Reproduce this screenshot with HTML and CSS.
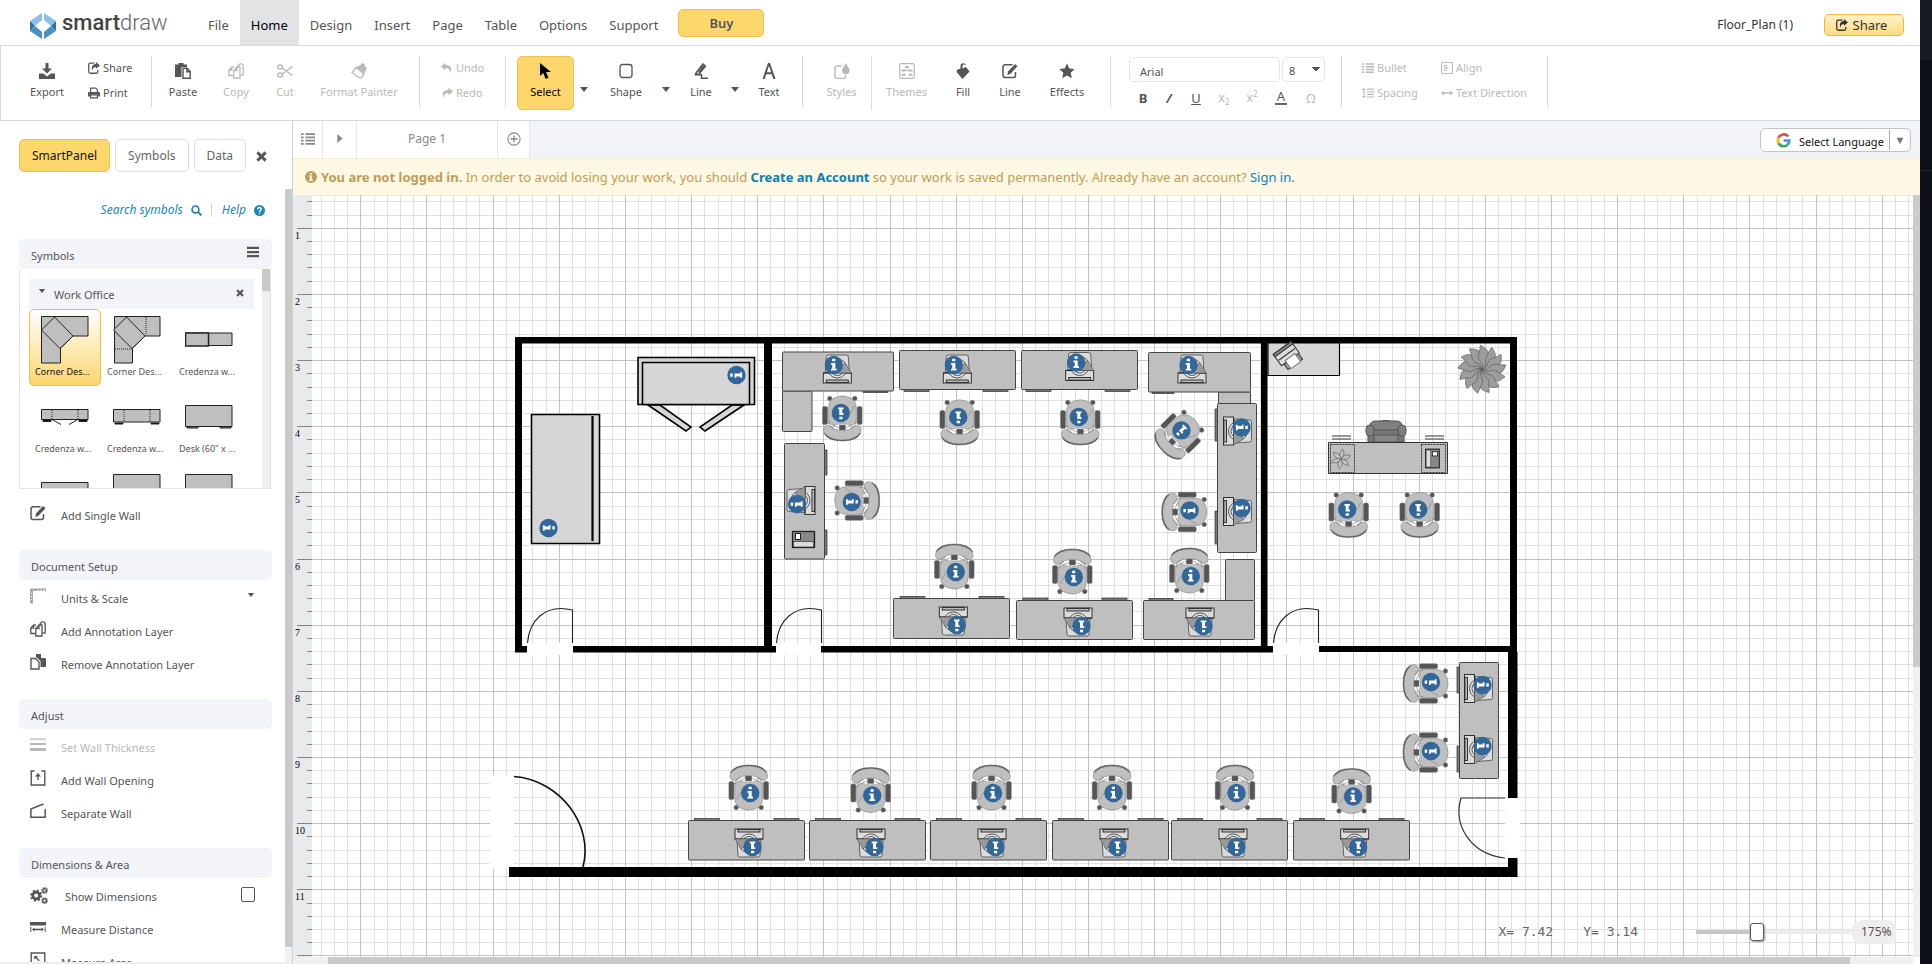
FILE: index.html
```html
<!DOCTYPE html>
<html lang="en">
<head>
<meta charset="utf-8">
<title>SmartDraw - Floor_Plan (1)</title>
<link rel="stylesheet" href="styles.css">
</head>
<body>
<svg class="defs" aria-hidden="true">
  <defs>
    <symbol id="i-export" viewBox="0 0 16 16"><path d="M6.5 0h3v5.5H13L8 10.5 3 5.500h3.500zM0 10.500h4.200L8 13.500l3.800-3H16V16H0z"/></symbol>
    <symbol id="i-share" viewBox="0 0 16 16"><path d="M8.500 1.500H3a2 2 0 0 0-2 2V13a2 2 0 0 0 2 2h8a2 2 0 0 0 2-2v-2.500" fill="none" stroke="currentColor" stroke-width="1.700"/><path d="M10.500 0 16 4.500l-5.500 4.500V6.500C7.500 6.500 6.300 8 6 11.500 4.300 8.500 5 3 10.500 2.700z"/></symbol>
    <symbol id="i-print" viewBox="0 0 16 16"><path d="M3.500 7V1.500h7l2 2V7M3.500 10.500h9v4h-9z" fill="none" stroke="currentColor" stroke-width="1.600"/><path d="M1.500 6.500h13q1.500 0 1.500 1.500v4.500h-2.500V10h-11v2.500H0V8q0-1.500 1.500-1.500z"/></symbol>
    <symbol id="i-paste" viewBox="0 0 16 16"><path d="M0 1.500h3.500V0h5v1.500H12V4H6.500v10H0z"/><path d="M8 5.200h4l3.200 3.200v6.800H8zM11.800 5.200v3.500h3.500" fill="none" stroke="currentColor" stroke-width="1.400"/></symbol>
    <symbol id="i-copy" viewBox="0 0 16 16"><path d="M5.500 12.500H.8V7l3-3.200H6M3.800 4v3.200H.8M9.500 3.500 12 .8h1.500l1.700 1.700v9.700h-3M5.800 7.500 9 4h3v11H5.800zM9 4v3.500H5.800" fill="none" stroke="currentColor" stroke-width="1.300"/></symbol>
    <symbol id="i-remove" viewBox="0 0 16 16"><path d="M1 4.500h4.500L9 8v7H1z" fill="none" stroke="currentColor" stroke-width="1.400"/><path d="M6 0h5v4h4l1 1v8h-5.500V7L6 3z"/></symbol>
    <symbol id="i-cut" viewBox="0 0 16 16"><g fill="none" stroke="currentColor" stroke-width="1.500"><ellipse cx="3.200" cy="4" rx="2.400" ry="2"/><ellipse cx="3.200" cy="12" rx="2.400" ry="2"/><path d="M5.300 5 15.500 12.500M5.300 11 15.500 3.500"/></g></symbol>
    <symbol id="i-brush" viewBox="0 0 16 16"><path d="M5 4.500 13 11l-3 4-4-1.500L1 9.500z" fill="none" stroke="currentColor" stroke-width="1.300"/><path d="m8 3 2-1.500L11 0l2.500 1L14 3.500 16 5l-2.500 5.500L5 4z"/></symbol>
    <symbol id="i-undo" viewBox="0 0 16 16"><path d="M6 1 0 6l6 5V8c4 0 6 1 5.500 6.500C16 9 13.500 4 6 4z"/></symbol>
    <symbol id="i-redo" viewBox="0 0 16 16"><path d="m10 1 6 5-6 5V8c-4 0-6 1-5.500 6.500C0 9 2.500 4 10 4z"/></symbol>
    <symbol id="i-cursor" viewBox="0 0 16 16"><path d="M2 0v13l3.200-3 2.500 6 2.800-1.200L8 9h5z"/></symbol>
    <symbol id="i-shape" viewBox="0 0 16 16"><rect x="2" y="1.500" width="12" height="13" rx="2.500" fill="none" stroke="currentColor" stroke-width="1.300"/></symbol>
    <symbol id="i-line" viewBox="0 0 16 16"><path d="M3 10 10 1l2.500 2L6 11l-3.500.500zM3 11.800h5.500v3.500H15" fill="none" stroke="currentColor" stroke-width="1.500"/><path d="M5 9 10 2l2 1.500L6.500 10z"/></symbol>
    <symbol id="i-text" viewBox="0 0 16 16"><path d="M1.500 16 7 0h2l5.500 16h-2.300l-1.500-4.700H5.200L3.700 16zM5.900 9.200h4.200L8 2.700z"/></symbol>
    <symbol id="i-styles" viewBox="0 0 16 16"><path d="M7.500 3H3a2 2 0 0 0-2 2v8.500a2 2 0 0 0 2 2h6.500a2 2 0 0 0 2-2V12" fill="none" stroke="currentColor" stroke-width="1.400"/><path d="M11.800 0c2 4 3.700 5 3.700 7.500a3.700 3.700 0 0 1-7.400 0C8.100 5 10 4 11.800 0z"/></symbol>
    <symbol id="i-themes" viewBox="0 0 16 16"><rect x=".7" y=".7" width="14.600" height="14.600" rx="1.500" fill="none" stroke="currentColor" stroke-width="1.200"/><path d="M6 3h4v2.200H6zM2.500 6.500h4v2H2.500zM9.500 6.500h4v2h-4zM6 7h4v1H6zM2.500 10.800h4v2h-4zM9.500 10.800h4v2h-4z"/></symbol>
    <symbol id="i-fill" viewBox="0 0 16 16"><path d="M5.500 5.500V2.500C5.500-.5 11-.5 11 2.500c-1-1.500-3.500-1.500-3.500.5v2.500l3.500-1.500 3.500 4.500L7.500 16 2 9.500 1.500 7z"/></symbol>
    <symbol id="i-edit" viewBox="0 0 16 16"><path d="M10.500 1.800H3a2 2 0 0 0-2 2v8.700a2 2 0 0 0 2 2h8.500a2 2 0 0 0 2-2V9" fill="none" stroke="currentColor" stroke-width="1.500"/><path d="m6 8.500 7-7.500 2.500 2.200-7 7.600L5.500 12z"/></symbol>
    <symbol id="i-star" viewBox="0 0 16 16"><path d="m8 .5 2.300 5 5.400.6-4 3.700 1.100 5.500L8 12.600l-4.800 2.700 1.100-5.500-4-3.700 5.400-.6z"/></symbol>
    <symbol id="i-list" viewBox="0 0 16 16"><path d="M0 1.500h3v2H0zM5 1.500h11v2H5zM0 5.200h3v2H0zM5 5.200h11v2H5zM0 8.900h3v2H0zM5 8.900h11v2H5zM0 12.600h3v2H0zM5 12.600h11v2H5z"/></symbol>
    <symbol id="i-spacing" viewBox="0 0 16 16"><path d="M2.500 1 5 4H3.300v8H5l-2.500 3L0 12h1.700V4H0zM6.500 2H16v1.600H6.500zM6.500 5.500H16v1.600H6.500zM6.500 9H16v1.600H6.500zM6.500 12.500H16v1.600H6.500z"/></symbol>
    <symbol id="i-align" viewBox="0 0 16 16"><path d="M.7.700h14.600v14.600H.7z" fill="none" stroke="currentColor" stroke-width="1.300"/><path d="M3.500 4h5v1.500h-5zM3.500 7h6.500v1.500H3.500zM3.500 10h4v1.500h-4z"/></symbol>
    <symbol id="i-dir" viewBox="0 0 16 16"><path d="m0 8 3.500-3.500V7h9V4.500L16 8l-3.500 3.500V9h-9v2.500z"/></symbol>
    <symbol id="i-x" viewBox="0 0 16 16"><path d="M3.500.5 8 5l4.500-4.500 3 3L11 8l4.500 4.500-3 3L8 11l-4.500 4.500-3-3L5 8 .5 3.500z"/></symbol>
    <symbol id="i-search" viewBox="0 0 16 16"><circle cx="6.500" cy="6.500" r="5" fill="none" stroke="currentColor" stroke-width="2.400"/><path d="m10 10 5 5" stroke="currentColor" stroke-width="3"/></symbol>
    <symbol id="i-help" viewBox="0 0 16 16"><circle cx="8" cy="8" r="8"/><path d="M5.300 6.200C5.300 2.500 10.800 3 10.600 6.200 10.500 8 8 7.800 8 10" fill="none" stroke="#fff" stroke-width="2"/><path d="M7 11.200h2v2H7z" fill="#fff"/></symbol>
    <symbol id="i-menu" viewBox="0 0 16 16"><path d="M0 1h16v3H0zM0 6.500h16v3H0zM0 12h16v3H0z"/></symbol>
    <symbol id="i-info" viewBox="0 0 16 16"><circle cx="8" cy="8" r="8"/><path d="M6.500 2.500h3v2.300h-3zM5.500 6h4v5.500h1.200v1.800H5.300v-1.800h1.200V7.800h-1z" fill="#fcf8e3"/></symbol>
    <symbol id="i-plus" viewBox="0 0 16 16"><circle cx="8" cy="8" r="7" fill="none" stroke="currentColor" stroke-width="1.200"/><path d="M8 4v8M4 8h8" stroke="currentColor" stroke-width="1.500"/></symbol>
    <symbol id="i-units" viewBox="0 0 16 16"><path d="M0 .5h16v3h-1V2h-1.500v1H12V2h-1.500v1H9V2H7.500v1H3v12.500H0zM1 5v1h1V5zM1 8v1h1V8zM1 11v1h1v-1z" opacity=".5"/></symbol>
    <symbol id="i-thick" viewBox="0 0 16 16"><path d="M0 1.500h16v1.200H0zM0 6h16v2H0zM0 11h16v3H0z"/></symbol>
    <symbol id="i-opening" viewBox="0 0 16 16"><path d="M4.500 1H1.200v14h13.600V1h-3.300" fill="none" stroke="currentColor" stroke-width="1.400"/><path d="m8 3 3 3.500H8.700V10H7.300V6.500H5z"/></symbol>
    <symbol id="i-separate" viewBox="0 0 16 16"><path d="M13.500 1 .9 6v8.200h14.300V6" fill="none" stroke="currentColor" stroke-width="1.500"/></symbol>
    <symbol id="i-gears" viewBox="0 0 16 16"><g fill="none" stroke="currentColor"><circle cx="5.500" cy="8.500" r="3" stroke-width="2.400"/><circle cx="5.500" cy="8.500" r="4.600" stroke-width="1.600" stroke-dasharray="1.800 1.800"/><circle cx="13" cy="4" r="1.600" stroke-width="1.300"/><circle cx="13" cy="4" r="2.600" stroke-dasharray="1 1"/><circle cx="13" cy="13" r="1.600" stroke-width="1.300"/><circle cx="13" cy="13" r="2.600" stroke-dasharray="1 1"/></g></symbol>
    <symbol id="i-measure" viewBox="0 0 16 16"><path d="M0 3h16v3.500H0zM.3 8h1v5h-1zM14.700 8h1v5h-1zM2 10.500l2.500-2v1.300h7V8.500l2.500 2-2.500 2v-1.300h-7v1.300z"/></symbol>
    <symbol id="i-area" viewBox="0 0 16 16"><path d="M1.200 1h13.600v14H1.200z" fill="none" stroke="currentColor" stroke-width="1.400"/><path d="M4 4h4L6.800 5.200l3 3-1 1-3-3L4.500 7.500z"/></symbol>
    <symbol id="i-caret" viewBox="0 0 8 5"><path d="M0 0h8L4 5z"/></symbol>

    <g id="badge"><circle r="9.200" fill="#336699"/><path d="M-1.700-6.300h3.200v2.500h-3.200zM-2.800-2h4.300v5.800h1.300v1.800h-5.600v-1.800h1.300V-.2h-1.300z" fill="#fff"/></g>
    <g id="chair" stroke="#777" stroke-width=".5">
      <rect x="-19.800" y="-6.500" width="5" height="18" rx="1.500" fill="#555"/><rect x="14.800" y="-6.500" width="5" height="18" rx="1.500" fill="#555"/>
      <circle cx="-12.500" cy="19.500" r="2.300" fill="#555"/><circle cx="12.500" cy="19.500" r="2.300" fill="#555"/>
      <path d="M-14-5q14-8 28 0V10q0 11-14 12.200Q-14 21-14 10z" fill="#bfbfbf"/>
      <path d="M-9-7Q0-13 9-7 0-4-9-7z" fill="#fff"/>
      <path d="M-18.500-15q4-8 18.500-8t18.500 8Q0-25-18.500-15z" fill="#555" stroke="#555"/>
      <path d="M-18.500-14Q-13-22 0-22t18.500 8q1.500 6-4 6.500-4 .5-7-4-7.500-2-15 0-3 4.500-7 4-5.500-.5-4-6.500z" fill="#bfbfbf"/>
      <path d="M-8-11q-6 1-5 8M8-11q6 1 5 8M-12 12q3-8 8-11" fill="none"/>
      <rect x="-3" y="-12" width="6" height="5" fill="#555"/>
      <use href="#badge" x="1.500" y="5" stroke="none"/>
    </g>
    <g id="pc" stroke="#222" stroke-width=".9">
      <path d="M-11-12q0-2 2-2H9q2 0 2 2l1 15h-24z" fill="#dcdcdc" stroke="#555"/>
      <rect x="-14" y="4" width="28" height="10" fill="#dcdcdc"/>
      <circle r="9.500" cy="-.5" fill="#e6e6e6" stroke="#444"/><circle r="7" cy="-.5" fill="#ececec" stroke="#444"/>
      <path d="M-14 4H14" stroke-width=".8"/>
      <rect x="-11" y="11" width="22" height="2.600" fill="#bbb"/>
      <path d="M-2 2 8-6 14 4H1z" fill="#9a9a9a" stroke="#444" stroke-width=".5"/>
      <use href="#badge" x="-3.500" y="-4" stroke="none"/>
    </g>
    <g id="phone" stroke="#222"><rect x="-11" y="-8" width="22" height="16" fill="#888" stroke-width="1.300"/><rect x="-8" y="-6" width="5" height="6" fill="#fff"/><rect x="-10" y="2" width="20" height="5.500" fill="#ddd" stroke-width=".6"/></g>
    <path id="door" d="M.5 643C2 622 17 603 45.500 610V643" fill="none" stroke="#222" stroke-width="1.100"/>
    <path id="leaf" d="M0 0C6-4-1-10 4-15 8-18 8-21 10-22 13-17 16-12 10-9 6-7 8-2 0 0z" fill="#9d9d9d" stroke="#555" stroke-width=".6"/>
    <path id="petal" d="M0 0Q-4-5 0-10 4-5 0 0z" fill="#c4c4c4" stroke="#666" stroke-width=".7"/>
  </defs>
</svg>

<div class="window">
<div class="app">
  <header class="menubar">
    <a class="logo" href="#">
      <svg viewBox="0 0 26 26" class="logo-mark"><path d="M12 0 0 8l5 5 7-6z" fill="#8cc0ec"/><path d="M14 0l12 8-5 5-7-6z" fill="#8cc0ec"/><path d="M0 8l5 5-5 5z" fill="#2f6fa3"/><path d="M26 8l-5 5 5 5z" fill="#2f6fa3"/><path d="M0 18l5-5 7 6v7z" fill="#4990c6"/><path d="M26 18l-5-5-7 6v7z" fill="#4990c6"/></svg>
      <span><b>smart</b>draw</span>
    </a>
    <nav class="menus">
      <a href="#">File</a><a href="#" class="on">Home</a><a href="#">Design</a><a href="#">Insert</a><a href="#">Page</a><a href="#">Table</a><a href="#">Options</a><a href="#">Support</a>
    </nav>
    <button class="buy">Buy</button>
    <span class="doc">Floor_Plan (1)</span>
    <button class="share"><svg><use href="#i-share"/></svg>Share</button>
  </header>

  <div class="toolbar">
    <div class="group g-export">
      <button class="tool"><svg><use href="#i-export"/></svg>Export</button>
      <div class="stack"><button><svg><use href="#i-share"/></svg>Share</button><button><svg><use href="#i-print"/></svg>Print</button></div>
    </div>
    <div class="group g-clip">
      <button class="tool"><svg><use href="#i-paste"/></svg>Paste</button>
      <button class="tool off"><svg><use href="#i-copy"/></svg>Copy</button>
      <button class="tool off"><svg><use href="#i-cut"/></svg>Cut</button>
      <button class="tool off"><svg><use href="#i-brush"/></svg>Format Painter</button>
    </div>
    <div class="group g-undo">
      <div class="stack off"><button><svg><use href="#i-undo"/></svg>Undo</button><button><svg><use href="#i-redo"/></svg>Redo</button></div>
    </div>
    <div class="group g-draw">
      <button class="tool selected"><svg><use href="#i-cursor"/></svg>Select</button>
      <button class="drop" aria-label="Select options"><svg><use href="#i-caret"/></svg></button>
      <button class="tool"><svg><use href="#i-shape"/></svg>Shape</button>
      <button class="drop" aria-label="Shape options"><svg><use href="#i-caret"/></svg></button>
      <button class="tool"><svg><use href="#i-line"/></svg>Line</button>
      <button class="drop" aria-label="Line options"><svg><use href="#i-caret"/></svg></button>
      <button class="tool"><svg><use href="#i-text"/></svg>Text</button>
    </div>
    <div class="group g-style">
      <button class="tool off split"><svg><use href="#i-styles"/></svg>Styles</button>
      <button class="tool off"><svg><use href="#i-themes"/></svg>Themes</button>
      <button class="tool"><svg><use href="#i-fill"/></svg>Fill</button>
      <button class="tool"><svg><use href="#i-edit"/></svg>Line</button>
      <button class="tool"><svg><use href="#i-star"/></svg>Effects</button>
    </div>
    <div class="group g-font">
      <div class="fields">
        <input class="font-name" aria-label="Font" value="Arial">
        <select class="font-size" aria-label="Font size"><option>8</option></select>
      </div>
      <div class="marks">
        <button><b>B</b></button><button><b class="slant">/</b></button><button><u>U</u></button><button class="off script">x<sub>2</sub></button><button class="off script">x<sup>2</sup></button><button class="color">A</button><button class="off">Ω</button>
      </div>
    </div>
    <div class="group g-para off">
      <div class="stack"><button><svg><use href="#i-list"/></svg>Bullet</button><button><svg><use href="#i-spacing"/></svg>Spacing</button></div>
      <div class="stack"><button><svg><use href="#i-align"/></svg>Align</button><button><svg><use href="#i-dir"/></svg>Text Direction</button></div>
    </div>
  </div>

  <div class="body">
    <aside class="sidebar">
      <div class="panel-tabs">
        <button class="on">SmartPanel</button><button>Symbols</button><button>Data</button>
        <button class="close" aria-label="Close panel"><svg><use href="#i-x"/></svg></button>
      </div>
      <div class="scroll">
        <div class="panel">
          <div class="links"><a href="#">Search symbols <svg><use href="#i-search"/></svg></a><a href="#">Help <svg><use href="#i-help"/></svg></a></div>
          <h2>Symbols<svg><use href="#i-menu"/></svg></h2>
          <div class="library">
            <div class="lib-body">
              <h3><svg class="caret"><use href="#i-caret"/></svg>Work Office<svg class="x"><use href="#i-x"/></svg></h3>
              <div class="cells">
                <button class="cell on"><svg viewBox="0 0 48 48"><path d="M.5.500h46.500v19.500H32L19.500 32.500V47H.5z"/><path d="m13.500 1 18.500 19L19 32.500.5 14z"/></svg>Corner Des...</button>
                <button class="cell"><svg viewBox="0 0 48 48"><path d="M1.500.500H47v19.500H32L19.500 32.500V47h-18z"/><path d="m13.500 1 18.500 19L19 32.500.500 14z"/><path d="M33 1v18M2 33h17" stroke-dasharray="1 1"/></svg>Corner Des...</button>
                <button class="cell"><svg viewBox="0 0 48 48"><path d="M.5 17H47v12.500H.5z"/><path d="M.5 17h23v13H.5z" stroke-width="1.500"/></svg>Credenza w...</button>
                <button class="cell"><svg viewBox="0 0 48 48"><path d="M.5 16.500H47v10H.5z"/><path d="M2 27h8v1.500H2zM38 27h8v1.500h-8z" fill="#000"/><path d="m12 27 8 4.500M36 27l-8 4.500"/><path d="M11 17v9M37 17v9" stroke-dasharray="1 1"/></svg>Credenza w...</button>
                <button class="cell"><svg viewBox="0 0 48 48"><path d="M.5 16.500H47v12.500H.5z"/><path d="M2 30h8v1H2zM38 30h8v1h-8z" fill="#000"/><path d="M11 17v12M37 17v12" stroke-dasharray="1 1"/></svg>Credenza w...</button>
                <button class="cell"><svg viewBox="0 0 48 48"><path d="M.5 12.500H47v21H.5zM2 34h11v1H2zM35 34h11v1H35z"/></svg>Desk (60" x ...</button>
                <button class="cell" aria-label="Low desk"><svg viewBox="0 0 48 48"><path d="M.5 12.500H47v21H.5z"/></svg></button>
                <button class="cell" aria-label="Desk"><svg viewBox="0 0 48 48"><path d="M.5 4.500H47v30H.5z"/></svg></button>
                <button class="cell" aria-label="Desk"><svg viewBox="0 0 48 48"><path d="M.5 4.500H47v30H.5z"/></svg></button>
              </div>
            </div>
            <div class="lib-track"><i></i></div>
          </div>
          <div class="rows solo"><button><svg><use href="#i-edit"/></svg>Add Single Wall</button></div>
          <h2>Document Setup</h2>
          <div class="rows">
            <button><svg><use href="#i-units"/></svg>Units &amp; Scale<svg class="caret"><use href="#i-caret"/></svg></button>
            <button><svg><use href="#i-copy"/></svg>Add Annotation Layer</button>
            <button><svg><use href="#i-remove"/></svg>Remove Annotation Layer</button>
          </div>
          <h2>Adjust</h2>
          <div class="rows">
            <button class="off"><svg><use href="#i-thick"/></svg>Set Wall Thickness</button>
            <button><svg><use href="#i-opening"/></svg>Add Wall Opening</button>
            <button><svg><use href="#i-separate"/></svg>Separate Wall</button>
          </div>
          <h2>Dimensions &amp; Area</h2>
          <div class="rows">
            <label><svg class="gears"><use href="#i-gears"/></svg>Show Dimensions<input type="checkbox"></label>
            <button><svg><use href="#i-measure"/></svg>Measure Distance</button>
            <button><svg><use href="#i-area"/></svg>Measure Area</button>
          </div>
        </div>
        <div class="side-track"><i></i></div>
      </div>
    </aside>

    <main class="work">
      <div class="pages">
        <button class="p-list" aria-label="Page list"><svg><use href="#i-list"/></svg></button>
        <button class="p-next" aria-label="Next page"><svg viewBox="0 0 6 10"><path d="M0 0l6 5-6 5z"/></svg></button>
        <button class="p-name">Page 1</button>
        <button class="p-add" aria-label="Add page"><svg><use href="#i-plus"/></svg></button>
        <button class="language"><svg viewBox="0 0 18 18"><g fill="none" stroke-width="3.200"><path d="M14.500 4A7 7 0 0 0 3 5.700" stroke="#e04a3f"/><path d="M3 5.700a7 7 0 0 0 0 6.600" stroke="#f4bd19"/><path d="M3 12.300a7 7 0 0 0 10.500 2" stroke="#3ba757"/><path d="M13.500 14.300A7 7 0 0 0 16 9H9" stroke="#4f8ee8"/></g></svg><span>Select Language</span><i>&#9660;</i></button>
      </div>
      <p class="notice"><svg><use href="#i-info"/></svg><b>You are not logged in.</b> In order to avoid losing your work, you should <a href="#"><b>Create an Account</b></a> so your work is saved permanently. Already have an account? <a href="#">Sign in.</a></p>
      <div class="stage">
        <svg class="plan" role="img" aria-label="Office floor plan">
          <g transform="translate(-293 -195)">
            <g id="grid"></g>
            <g id="ruler"></g>
            <path d="M527 643h46v12h-46zM776 643h45v12h-45zM1273 643h46v12h-46zM490 775h24v94h-24zM1505 798h15v60h-15z" fill="#fff"/>
            <path d="M515 337H1517V652H1319V646H1510V343.500H1267.500V646H1273V652.500H821V646H1261V343.500H772V646H776V652.500H573V646H764V343.500H522V646H527V652.500H515z"/>
            <path d="M1508 652h9.500v146h-9.500zM1508 858h9.500v19H509V867h999z"/>
            <use href="#door" x="527"/><use href="#door" x="776"/><use href="#door" x="1273"/>
            <path d="M514 776.500C560 780 594 825 583 867" fill="none" stroke="#111" stroke-width="1.600"/>
            <path d="M1505 798H1461C1453 825 1470 854 1505 858" fill="none" stroke="#333" stroke-width="1.200"/>
            <g fill="#d6d6d6" stroke="#000" stroke-width="1.600">
              <path d="M648 405H660L691 427 686 431zM732 405H744L705 431 700 427z"/>
              <path d="M638 357.500H754.500V404.500H638z"/><path d="M642.500 362.500H749.500V404.500H642.500z"/>
              <path d="M531.500 414.500H599.500V543.500H531.500z"/><path d="M592.500 416V541" stroke-width="2.200"/>
              <path d="M1268 343H1339.500V375.500H1268z" stroke-width="1.200"/>
            </g>
            <g id="furniture"></g>
            <g transform="translate(1288 356) rotate(-36)" fill="#ddd" stroke="#333"><path d="M-8 4H10V11H-8z" fill="#999"/><path d="M-11-10H11V4H-11z"/><path d="M-11-10H11V-7H-11z" fill="#888"/><path d="M-10-2H10"/><path d="M-5 2H7V12H-5z" fill="#fff" stroke="#777"/></g>
            <g stroke="#555"><path d="M1368 442V426Q1386 415 1404 426V442z" fill="#777"/><rect x="1370" y="421" width="32" height="9" rx="5" fill="#808080"/><rect x="1366" y="425" width="8" height="11" rx="4" fill="#808080"/><rect x="1398" y="425" width="8" height="11" rx="4" fill="#808080"/><path d="M1374 435h24v7h-24z" fill="#858585"/></g>
            <g stroke="#333"><path d="M1328.500 442.500h119v31h-119z" fill="#bfbfbf"/><path d="M1330.500 444.500h24v28h-24zM1421.500 444.500h24v28h-24z" fill="none" stroke-dasharray="2 1"/><path d="M1332 436h19M1332 439h19M1425 436h19M1425 439h19"/></g>
            <use href="#phone" transform="translate(1432.500 458.500) rotate(90) scale(.85)"/>
            <g id="plants"></g>
          </g>
        </svg>
        <div class="v-track"><i></i></div>
        <div class="h-track"><i></i></div>
        <div class="status">
          <span>X= 7.42</span><span>Y= 3.14</span>
          <input type="range" min="0" max="100" value="38" aria-label="Zoom">
          <output>175%</output>
        </div>
      </div>
    </main>
  </div>
</div>
<div class="edge"><i></i></div>
</div>
<script src="plan.js"></script>
</body>
</html>
```
FILE: styles.css
```css
* { box-sizing: border-box; }
body { margin: 0; font: 13px/20px "Noto Sans", "Open Sans", sans-serif; color: #555; background: #fff; }
button, input, select { font: inherit; color: inherit; background: none; border: 0; padding: 0; margin: 0; }
a { color: inherit; text-decoration: none; }
svg { fill: currentColor; flex: none; }
h2, h3, p { margin: 0; font-weight: 400; }
i { font-style: normal; }
.defs { position: absolute; width: 0; height: 0; }
.off { color: #b9b9b9; }

.window { display: flex; height: 100vh; overflow: hidden; }
.app { flex: 1; min-width: 0; display: flex; flex-direction: column; }
.edge { width: 12px; background: #0d1017; }
.edge i { display: block; height: 171px; border-bottom: 1px solid #23272e; background: linear-gradient(#161b22 60px, #0d1017 60px); }

.menubar { display: flex; align-items: center; height: 46px; padding: 0 16px 0 30px; border-bottom: 1px solid #d8d9db; }
.logo { display: flex; align-items: center; gap: 6px; width: 167px; color: #666; font: 300 22px/24px Roboto, sans-serif; }
.logo b { color: #444; font-weight: 500; }
.logo-mark { width: 26px; height: 26px; margin-top: 6px; }
.menus { display: flex; align-self: stretch; }
.menus a { padding: 15px 11px 0; }
.menus .on { background: #e2e3e5; color: #000; }
.buy { width: 86px; height: 28px; margin: 0 auto 0 9px; border: 1px solid #f0c14f; border-radius: 5px; background: #fdd76c; font-weight: 600; }
.doc { color: #333; font-size: 12px; padding-top: 4px; }
.share { display: flex; align-items: center; justify-content: center; gap: 4px; width: 80px; height: 22px; margin: 4px 0 0 31px; padding-right: 6px; border: 1px solid #efb73e; border-radius: 5px; background: linear-gradient(#fff3cd, #fcdb7c); color: #333; }
.share svg { width: 14px; height: 12px; }

.toolbar { display: flex; height: 75px; padding-top: 10px; border-bottom: 1px solid #d8d9db; border-left: 1px solid #d8d9db; font-size: 11px; }
.group { display: grid; height: 51px; border-right: 1px solid #d8d9db; }
.tool { display: flex; flex-direction: column; align-items: center; gap: 4px; height: 54px; padding-top: 7px; line-height: 18px; white-space: nowrap; }
.tool svg { width: 16px; height: 16px; }
.selected { border: 1px solid #f0c14f; border-radius: 5px; background: #fdd76c; color: #000; padding-top: 6px; }
.drop svg { width: 8px; height: 5px; margin-top: 18px; }
.stack { display: flex; flex-direction: column; gap: 5px; padding-top: 2px; }
.stack button { display: flex; align-items: center; gap: 3px; height: 20px; white-space: nowrap; }
.stack svg { width: 12px; height: 12px; }
.g-export { width: 151px; padding-left: 13px; column-gap: 8px; grid-template-columns: 66px auto; }
.g-clip { width: 268px; grid-template-columns: 62px 44px 54px 94px; }
.g-undo { width: 86px; padding-left: 21px; }
.g-draw { width: 297px; padding-left: 11px; grid-template-columns: 57px 20px 64px 16px 54px 14px 54px; }
.g-style { width: 308px; padding-left: 9px; grid-template-columns: 60px 69px 44px 50px 64px; }
.split { border-right: 1px solid #ddd; }
.g-font { width: 231px; padding-left: 18px; align-content: start; }
.g-para { width: 206px; padding-left: 20px; grid-template-columns: 79px auto; }
.fields { display: flex; gap: 2px; padding-top: 1px; }
.font-name { width: 151px; height: 25px; padding: 4px 10px 0; border: 1px solid #e4e4e4; border-radius: 5px; }
.font-size { appearance: none; width: 43px; height: 25px; padding: 2px 6px 0; border: 1px solid #e4e4e4; border-radius: 5px; background: conic-gradient(from -39deg at 50% 100%, #555 78deg, transparent 0) 29px 9px / 8px 5px no-repeat; }
.marks { display: grid; grid-template-columns: 28px 24px 30px 26px 30px 28px 32px; height: 26px; padding-top: 6px; font-size: 13px; }
.marks .script { font-size: 12px; }
.marks sub, .marks sup { font-size: 8px; line-height: 0; }
.slant { font-style: italic; }
.color { justify-self: center; width: 12px; height: 17px; line-height: 17px; border-bottom: 2px solid #666; }

.body { flex: 1; min-height: 0; display: flex; }
.sidebar { width: 293px; display: flex; flex-direction: column; border-right: 1px solid #d0d1d3; font-size: 11px; }
.panel-tabs { display: flex; gap: 5px; padding: 18px 19px 17px; font-size: 12px; color: #666; }
.panel-tabs button { height: 33px; padding: 0 12px; border: 1px solid #dcdde0; border-radius: 5px; }
.panel-tabs .on { background: #fdd76c; border-color: #f0c14f; color: #111; }
.panel-tabs .close { border: 0; padding: 5px 0 0 5px; color: #555; }
.close svg { width: 11px; height: 11px; }
.scroll { flex: 1; min-height: 0; display: flex; overflow: hidden; border-bottom: 2px solid #eee; }
.panel { flex: 1; overflow: hidden; padding: 0 13px 0 19px; }
.side-track { width: 7px; background: #f1f1f1; }
.side-track i { display: block; height: 98%; background: #c9caca; }
.links { display: flex; justify-content: flex-end; gap: 20px; height: 50px; padding: 11px 7px 0 0; font-size: 12px; font-style: italic; color: #1b86b9; }
.links a { height: 20px; display: flex; align-items: center; gap: 8px; }
.links svg { width: 11px; height: 11px; }
.links a + a { position: relative; }
.links a + a::before { content: ""; position: absolute; left: -11px; top: 3px; height: 14px; border-left: 1px solid #d4d4d4; }
.panel h2 { display: flex; justify-content: space-between; height: 30px; padding: 7px 13px 0 12px; border-radius: 5px; background: #f3f4f7; font-size: 11px; }
h2 svg { width: 12px; height: 12px; }
.library { display: flex; height: 220px; margin-right: 1px; border: solid #e2e3e5; border-width: 0 1px 1px; overflow: hidden; }
.lib-body { flex: 1; padding: 10px 8px 0 9px; }
.lib-track { width: 8px; background: #f0f0f0; }
.lib-track i { display: block; height: 22px; background: #c9c9c9; }
h3 { display: flex; height: 30px; padding: 6px 10px 0 9px; background: #f3f4f7; font-size: 11px; }
h3 .caret { width: 8px; height: 4px; margin: 4px 8px 0 0; }
h3 .x { width: 8px; height: 8px; margin: 4px 0 0 auto; }
.cells { display: grid; grid-template-columns: repeat(3, 72px); grid-auto-rows: 77px; }
.cell { display: flex; flex-direction: column; align-items: flex-start; padding: 6px 0 0 5px; border: 1px solid transparent; border-radius: 5px; font-size: 9px; line-height: 14px; white-space: nowrap; }
.cell.on { background: linear-gradient(#fff, #fbd66d); border-color: #efbd45; color: #111; }
.cell svg { width: 48px; height: 48px; margin: 0 0 1px 6px; fill: #bfbfbf; stroke: #222; }
.rows { padding: 3px 17px 17px 11px; }
.rows.solo { padding: 11px 11px 17px; }
.rows button, .rows label { display: flex; align-items: flex-start; width: 100%; height: 33px; padding-top: 6px; text-align: left; }
.rows svg { width: 16px; height: 16px; margin: -1px 15px 0 0; }
.rows .gears { width: 18px; height: 18px; margin-right: 17px; }
.rows .caret { width: 8px; height: 4px; margin: 4px 0 0 auto; }
.rows input { appearance: none; width: 14px; height: 15px; margin: 0 0 0 auto; border: 1px solid #555; border-radius: 2px; }

.work { flex: 1; min-width: 0; display: flex; flex-direction: column; }
.pages { display: flex; height: 37px; background: #f3f4f7; color: #888; font-size: 12px; }
.pages > button { background: #fff; border-right: 1px solid #e6e7e9; }
.p-list { width: 30px; } .p-next { width: 34px; } .p-name { width: 141px; padding-bottom: 2px; } .p-add { width: 32px; }
.p-list svg { width: 14px; height: 14px; } .p-add svg { width: 14px; height: 14px; } .p-next svg { width: 6px; height: 9px; }
.p-list, .p-next, .p-add { display: grid; place-items: center; padding-bottom: 2px; }
.pages > .language { display: flex; align-items: center; width: 151px; height: 24px; margin: 7px 9px 0 auto; padding-left: 15px; border: 1px solid #c4c4c4; border-radius: 5px; color: #111; font-size: 11px; white-space: nowrap; }
.language svg { width: 15px; height: 15px; margin-right: 8px; }
.language span { flex: 1; padding-top: 3px; text-align: left; }
.language i { width: 21px; border-left: 1px solid #aaa; color: #777; line-height: 20px; text-align: center; }
.notice { height: 38px; padding: 9px 12px; border: solid #faebcc; border-width: 1px 0; background: #fcf8e3; color: #bf9c58; white-space: nowrap; line-height: 19px; }
.notice svg { width: 12px; height: 12px; margin-right: 4px; vertical-align: -1px; }
.notice a { color: #0f7db5; }
.stage { position: relative; flex: 1; min-height: 0; display: grid; grid-template: minmax(0, 1fr) 7px / minmax(0, 1fr) 7px; margin-top: -1px; z-index: 0; }
.plan { width: 100%; height: 100%; fill: #000; }
.plan text { font: 10px "Liberation Serif", serif; }
.v-track, .h-track { background: #f0f0f0; }
.v-track i { display: block; height: 62%; background: #ccc; }
.h-track { padding-left: 35px; }
.h-track i { display: block; width: 96%; height: 7px; background: #c9c9c9; }
.status { position: absolute; right: 24px; bottom: 20px; display: flex; align-items: center; height: 24px; font: 13px/24px "DejaVu Sans Mono", monospace; color: #666; }
.status span { margin-right: 30px; }
.status input { appearance: none; width: 155px; height: 20px; margin-left: 28px; background: linear-gradient(90deg, #c6c6c6 40%, #eee 40%) center / 100% 4px no-repeat; }
.status input::-webkit-slider-thumb { appearance: none; width: 14px; height: 18px; border: 1px solid #555; border-radius: 3px; background: #fff; box-shadow: 1px 1px 2px #999; }
.status output { width: 45px; padding-left: 10px; background: #eee; border-radius: 12px 8px 8px 12px; font: 12px/24px "Noto Sans", sans-serif; color: #555; }
```
FILE: plan.js
```js
const NS = "http://www.w3.org/2000/svg";
function add(parent, tag, attrs, text) {
  const el = document.createElementNS(NS, tag);
  for (const k in attrs) el.setAttribute(k, attrs[k]);
  if (text) el.textContent = text;
  document.getElementById(parent).appendChild(el);
}

// Grid and ruler: one major line per unit, five divisions each.
const STEP = 13.23, X1 = 360.8, Y1 = 228.3;
let minor = "", major = "", ticks = "";
for (let k = -3; k < 130; k++) {
  const x = Math.floor(X1 + k * STEP) + 0.5;
  if (k % 5) minor += `M${x} 195V970`; else major += `M${x} 195V970`;
}
for (let k = -2; k < 60; k++) {
  const y = Math.floor(Y1 + k * STEP) + 0.5;
  if (k % 5) minor += `M312 ${y}H2400`; else major += `M312 ${y}H2400`;
  ticks += `M${k % 5 ? 307 : 297} ${y}H312`;
  if (k % 5 === 0 && k < 55) add("ruler", "text", { x: 295, y: y + 10 }, String(k / 5 + 1));
}
add("grid", "path", { d: minor, stroke: "#e0e0e0" });
add("grid", "path", { d: major, stroke: "#c2c2c2" });
const ruler = document.getElementById("ruler");
const labels = [...ruler.children];
add("ruler", "path", { d: "M293 195H312V1400H293z", fill: "#e9eaec" });
add("ruler", "path", { d: ticks, stroke: "#858585" });
labels.forEach(l => ruler.appendChild(l));

// Desks: x, y, width, height
const desks = [
  [782.5, 391, 29.5, 40.5], [782.5, 352, 111, 39], [899.5, 350.5, 116, 39], [1021.5, 350.5, 116, 39],
  [1218.5, 392, 32, 12], [1148.5, 352.5, 102, 39.5], [1217.5, 403.5, 39, 149], [1225.5, 559.5, 29, 41],
  [1143.5, 600.5, 111, 39], [893.5, 598.5, 116, 40], [1016.5, 600.5, 116, 39], [784.5, 443.5, 40, 115.5],
  [688.5, 820.5, 116, 39.5], [809.5, 820.5, 116, 39.5], [930.5, 820.5, 116, 39.5], [1052.5, 820.5, 116, 39.5],
  [1171.5, 820.5, 116, 39.5], [1293.5, 820.5, 116, 39.5], [1459.5, 662.5, 39, 116]
];
const feet = [
  [863, 391, 25, 1.5], [904, 389.5, 25, 2], [983, 389.5, 25, 2], [1026, 389.5, 25, 2], [1105, 389.5, 25, 2],
  [1152, 392, 22, 1.5], [1215, 409, 2.5, 32], [1215, 511, 2.5, 33], [1149, 598.5, 24, 2],
  [900, 596.5, 25, 2], [979, 596.5, 25, 2], [1023, 598, 25, 2.5], [1102, 598, 25, 2.5],
  [824.5, 450, 2.5, 25], [824.5, 530, 2.5, 25], [1457, 667, 2.5, 26], [1457, 746, 2.5, 26]
];
for (const x of [688.5, 809.5, 930.5, 1052.5, 1171.5, 1293.5]) feet.push([x + 6, 818.5, 25, 2], [x + 85.5, 818.5, 25, 2]);
const rect = (r, a) => add("furniture", "rect", { x: r[0], y: r[1], width: r[2], height: r[3], ...a });
feet.forEach(r => rect(r, { fill: "#777", stroke: "#333", "stroke-width": 0.7 }));
desks.forEach(r => rect(r, { fill: "#bfbfbf", stroke: "#444", rx: 1 }));

// Placed symbols: name, x, y, rotation
const items = [
  ["pc", 837.3, 369, 0], ["pc", 957.3, 369, 0], ["pc", 1079.7, 366.5, 0], ["pc", 1192, 369, 0],
  ["pc", 953.3, 621, 180], ["pc", 1078, 622, 180], ["pc", 1200, 622, 180],
  ["pc", 1237.5, 431, 90], ["pc", 1237.5, 511.5, 90], ["pc", 801, 500.5, -90],
  ["pc", 1478.5, 688.5, 90], ["pc", 1478.5, 749.5, 90],
  ["chair", 954.3, 567, 0], ["chair", 1072.3, 572, 0], ["chair", 1189.3, 571, 0],
  ["chair", 842.3, 418, 180], ["chair", 959.7, 422, 180], ["chair", 1080.3, 422, 180],
  ["chair", 1348.7, 514.5, 180], ["chair", 1419.7, 514.5, 180],
  ["chair", 856.7, 500.5, 90], ["chair", 1184.7, 512, -90], ["chair", 1426, 683.5, -90], ["chair", 1426, 752.5, -90],
  ["chair", 1179, 435, -135],
  ["chair", 748.7, 788, 0], ["chair", 870.7, 790.5, 0], ["chair", 991.5, 788, 0],
  ["chair", 1112, 788, 0], ["chair", 1235, 788, 0], ["chair", 1351.6, 791.5, 0],
  ["phone", 803.5, 539.5, 0],
  ["badge", 736.5, 375, -90], ["badge", 548.5, 528, 90]
];
for (const x of [749, 871, 992, 1114, 1233, 1354.7]) items.push(["pc", x, 843, 180]);
for (const [name, x, y, r] of items)
  add("furniture", "use", { href: "#" + name, transform: `translate(${x} ${y}) rotate(${r})` });

for (let a = 0; a < 360; a += 27.7)
  add("plants", "use", { href: "#leaf", transform: `translate(1482 369.5) rotate(${a})` });
for (let a = 10; a < 360; a += 60)
  add("plants", "use", { href: "#petal", transform: `translate(1341 459) rotate(${a})` });
```
